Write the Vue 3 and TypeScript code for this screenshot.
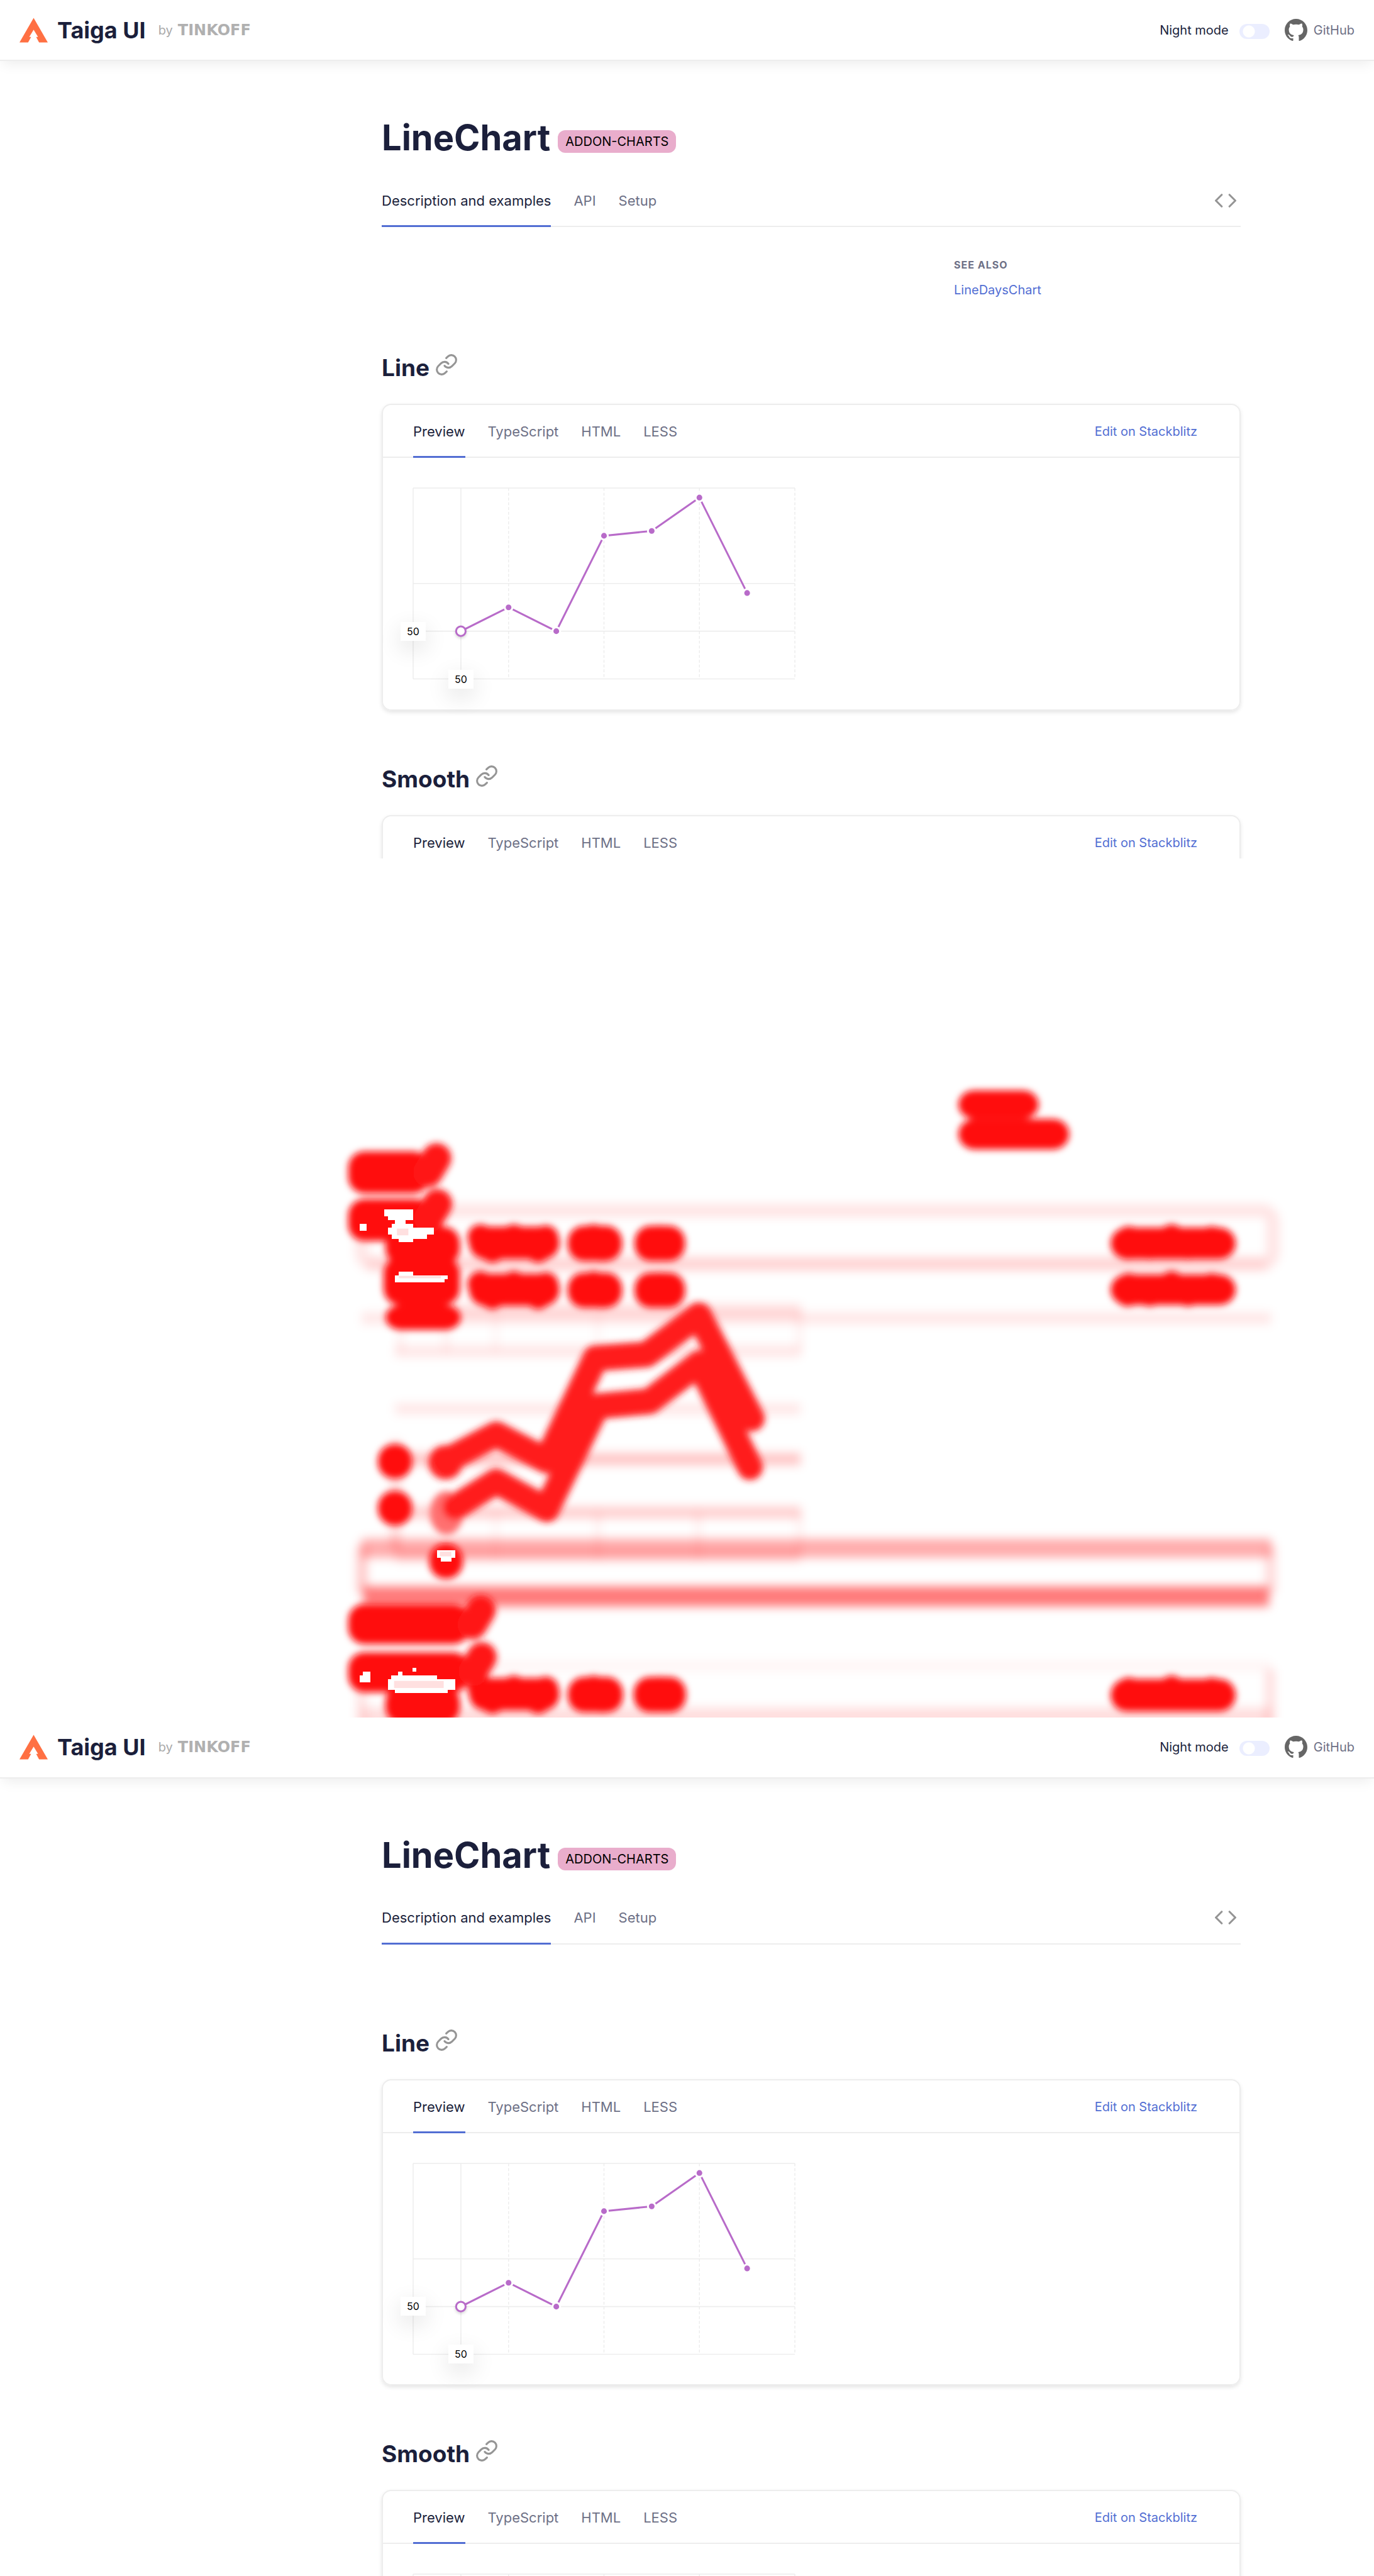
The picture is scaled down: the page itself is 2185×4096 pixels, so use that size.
<script setup lang="ts">
interface Frame {
  id: string
  seeAlso: boolean
}

const before: Frame = { id: 'before', seeAlso: true }
const after: Frame = { id: 'after', seeAlso: false }
const frames: (Frame | null)[] = [before, null, after]

const pageTabs = ['Description and examples', 'API', 'Setup']
const cardTabs = ['Preview', 'TypeScript', 'HTML', 'LESS']
const examples = ['Line', 'Smooth']

const points: [number, number][] = [
  [100, 300], [200, 250], [300, 300], [400, 100], [500, 90], [600, 20], [700, 220],
]
const linePath = points.map((p) => p.join(',')).join(' ')

type Box = [number, number, number, number]

// Regions that differ: x, y, width, height on the 2880 x 1800 frame
const blobs: Box[] = [
  [2009, 486, 168, 60], [2009, 546, 232, 64],
  [730, 614, 170, 88], [730, 714, 174, 88],
  [808, 772, 156, 80], [804, 836, 160, 100], [808, 936, 158, 52],
  [983, 772, 190, 68], [1190, 770, 114, 74], [1330, 770, 106, 74],
  [983, 870, 190, 68], [1190, 868, 114, 74], [1330, 868, 106, 74],
  [2328, 774, 262, 66], [2328, 872, 262, 64],
  [792, 1228, 72, 72], [792, 1326, 72, 72], [900, 1436, 70, 74],
  [730, 1563, 254, 84], [730, 1664, 254, 84], [808, 1734, 156, 80],
  [983, 1718, 190, 68], [1190, 1716, 116, 74], [1328, 1716, 110, 74],
  [2328, 1720, 262, 68],
]

// Uneven edges of the wide regions, where letters rise above or fall below
const rows = [806, 904, 1752]
const bumps: [number, number][] = rows.flatMap((y): [number, number][] => [
  [1007, y - 12], [1077, y - 12], [1144, y - 10], [1032, y + 14], [1128, y + 14],
  [1244, y - 12], [1262, y + 12], [1382, y - 10], [1382, y + 10],
  [2366, y - 8], [2456, y - 12], [2540, y - 8], [2364, y + 8], [2410, y + 8], [2490, y + 8],
])

// Link icons next to the headings
const hooks: [number, number][] = [[915, 628], [917, 724], [1008, 1576], [1010, 1674]]

// Overflowed cells
const holes: Box[] = [
  [805, 735, 61, 15], [813, 750, 53, 8], [828, 758, 22, 8], [821, 766, 45, 8],
  [813, 774, 97, 15], [821, 789, 74, 8], [836, 797, 30, 7], [754, 766, 15, 15],
  [836, 866, 30, 8], [828, 874, 111, 8], [828, 882, 104, 7],
  [916, 1450, 38, 16], [924, 1466, 23, 8],
  [761, 1704, 15, 8], [754, 1712, 22, 15], [835, 1704, 8, 8], [865, 1697, 8, 8],
  [820, 1712, 96, 9], [813, 1720, 141, 23], [828, 1743, 111, 7],
]

const faint: { box: Box; opacity: number }[] = [
  { box: [758, 951, 1906, 26], opacity: 0.09 },
  { box: [828, 934, 850, 28], opacity: 0.12 },
  { box: [828, 1020, 850, 26], opacity: 0.09 },
  { box: [828, 1142, 850, 24], opacity: 0.09 },
  { box: [828, 1246, 850, 26], opacity: 0.22 },
  { box: [828, 1358, 850, 26], opacity: 0.18 },
  { box: [828, 1446, 850, 30], opacity: 0.12 },
  { box: [758, 1426, 1906, 40], opacity: 0.32 },
  { box: [762, 1526, 1898, 42], opacity: 0.52 },
  { box: [758, 1682, 1906, 22], opacity: 0.04 },
  { box: [758, 1780, 1906, 40], opacity: 0.13 },
  { box: [748, 1440, 22, 100], opacity: 0.22 },
  { box: [2652, 1440, 22, 100], opacity: 0.15 },
  { box: [748, 1700, 20, 120], opacity: 0.12 },
  { box: [2652, 1700, 20, 120], opacity: 0.13 },
  { box: [832, 950, 14, 84], opacity: 0.06 },
  { box: [928, 950, 14, 84], opacity: 0.06 },
  { box: [1032, 950, 14, 84], opacity: 0.04 },
  { box: [1246, 950, 14, 84], opacity: 0.04 },
  { box: [1668, 950, 14, 84], opacity: 0.06 },
  { box: [818, 1220, 22, 230], opacity: 0.14 },
  { box: [1032, 1370, 14, 100], opacity: 0.04 },
  { box: [1246, 1370, 14, 100], opacity: 0.06 },
  { box: [1456, 1370, 14, 100], opacity: 0.06 },
  { box: [1668, 1370, 14, 90], opacity: 0.06 },
]
</script>

<template>
  <div class="board">
    <template v-for="(frame, i) in frames" :key="i">
      <section v-if="frame" class="frame">
        <header class="header">
          <a class="brand" href="#">
            <svg class="logo" viewBox="0 0 60 52" aria-hidden="true">
              <path fill="#ff7043" d="M30 0 60 52H41.5L35.3 40.3H39.3L30 25 20.7 40.3H24.7L18.2 52H0Z" />
            </svg>
            <span class="name">Taiga UI</span>
          </a>
          <span class="by">by</span>
          <a class="owner" href="#">TINKOFF</a>
          <label class="night" :for="frame.id + '-night'">Night mode</label>
          <input :id="frame.id + '-night'" class="toggle" type="checkbox" />
          <a class="github" href="#">
            <svg viewBox="0 0 16 16" aria-hidden="true">
              <path
                fill="#666"
                d="M8 0C3.58 0 0 3.58 0 8c0 3.54 2.29 6.53 5.47 7.59.4.07.55-.17.55-.38 0-.19-.01-.82-.01-1.49-2.01.37-2.53-.49-2.69-.94-.09-.23-.48-.94-.82-1.13-.28-.15-.68-.52-.01-.53.63-.01 1.08.58 1.23.82.72 1.21 1.87.87 2.33.66.07-.52.28-.87.51-1.07-1.78-.2-3.64-.89-3.64-3.95 0-.87.31-1.59.82-2.15-.08-.2-.36-1.02.08-2.12 0 0 .67-.21 2.2.82.64-.18 1.32-.27 2-.27s1.36.09 2 .27c1.53-1.04 2.2-.82 2.2-.82.44 1.1.16 1.92.08 2.12.51.56.82 1.27.82 2.15 0 3.07-1.87 3.75-3.65 3.95.29.25.54.73.54 1.48 0 1.07-.01 1.93-.01 2.2 0 .21.15.46.55.38A8.01 8.01 0 0 0 16 8c0-4.42-3.58-8-8-8Z"
              />
            </svg>
            GitHub
          </a>
        </header>

        <main class="page">
          <div class="title">
            <h1>LineChart</h1>
            <span class="badge">ADDON-CHARTS</span>
          </div>

          <nav class="tabs page-tabs">
            <button v-for="(tab, t) in pageTabs" :key="tab" type="button" :class="['tab', { active: t === 0 }]">
              {{ tab }}
            </button>
            <button class="code" type="button" aria-label="Source code">
              <svg viewBox="0 0 44 28" aria-hidden="true">
                <path d="M14 2 2 14 14 26M30 2 42 14 30 26" />
              </svg>
            </button>
          </nav>

          <div class="intro">
            <aside v-if="frame.seeAlso" class="see-also">
              <h3>SEE ALSO</h3>
              <a href="#">LineDaysChart</a>
            </aside>
          </div>

          <section v-for="name in examples" :key="name" class="example">
            <h2>
              {{ name }}
              <a class="anchor" href="#" :aria-label="name + ' link'">
                <svg viewBox="1 1 22 22" aria-hidden="true">
                  <path d="M10 13a5 5 0 0 0 7.54.54l3-3a5 5 0 0 0-7.07-7.07l-1.72 1.71M14 11a5 5 0 0 0-7.54-.54l-3 3a5 5 0 0 0 7.07 7.07l1.71-1.71" />
                </svg>
              </a>
            </h2>
            <div class="card">
              <div class="tabs card-tabs">
                <button v-for="(tab, t) in cardTabs" :key="tab" type="button" :class="['tab', { active: t === 0 }]">
                  {{ tab }}
                </button>
                <a class="edit" href="#">Edit on Stackblitz</a>
              </div>
              <div class="preview">
                <div class="chart">
                  <svg viewBox="0 0 800 400" aria-hidden="true">
                    <g class="grid">
                      <path d="M0 0H800M0 200H800M0 300H800M0 400H800M0 0V400M100 0V400" />
                      <path class="dashed" d="M200 0V400M400 0V400M600 0V400M800 0V400" />
                    </g>
                    <polyline class="line" :points="linePath" />
                    <circle v-for="p in points.slice(1)" :key="p[0]" class="dot" :cx="p[0]" :cy="p[1]" r="8" />
                    <circle class="dot-active" cx="100" cy="300" r="10" />
                  </svg>
                  <span class="hint hint-y">50</span>
                  <span class="hint hint-x">50</span>
                </div>
              </div>
            </div>
          </section>
        </main>
      </section>

      <section v-else class="frame">
        <svg class="diff" viewBox="0 0 2880 1800" preserveAspectRatio="none" aria-hidden="true">
          <defs>
            <filter id="soft" filterUnits="userSpaceOnUse" x="0" y="0" width="2880" height="1800">
              <feGaussianBlur stdDeviation="7" />
            </filter>
            <filter id="haze" filterUnits="userSpaceOnUse" x="0" y="0" width="2880" height="1830">
              <feGaussianBlur stdDeviation="10" />
            </filter>
          </defs>
          <g filter="url(#haze)">
            <rect x="758" y="738" width="1910" height="112" rx="24" fill="none" stroke="#f00" stroke-opacity="0.1" stroke-width="28" />
            <rect x="770" y="836" width="1884" height="28" fill="#f00" fill-opacity="0.08" />
            <rect
              v-for="(f, k) in faint" :key="'f' + k" fill="#f00" :fill-opacity="f.opacity"
              :x="f.box[0]" :y="f.box[1]" :width="f.box[2]" :height="f.box[3]"
            />
          </g>
          <g filter="url(#soft)">
            <circle cx="934" cy="1266" r="36" fill="#ff2020" />
            <ellipse cx="936" cy="1372" rx="35" ry="46" fill="#ff7070" />
            <g class="trace">
              <polyline points="940,1260 1040,1207 1146,1262 1248,1048 1355,1040 1465,958 1576,1174" />
              <polyline points="954,1360 1040,1306 1146,1364 1251,1148 1361,1138 1466,1058 1572,1276" />
            </g>
            <rect
              v-for="(b, k) in blobs" :key="'b' + k" fill="#ff0c0c" rx="34"
              :x="b[0]" :y="b[1]" :width="b[2]" :height="b[3]"
            />
            <circle v-for="(b, k) in bumps" :key="'c' + k" fill="#ff0c0c" :cx="b[0]" :cy="b[1]" r="27" />
            <line
              v-for="(h, k) in hooks" :key="'h' + k" class="hook"
              :x1="h[0]" :y1="h[1]" :x2="h[0] - 18" :y2="h[1] + 30"
            />
          </g>
          <rect
            v-for="(h, k) in holes" :key="'w' + k" fill="#fff" shape-rendering="crispEdges"
            :x="h[0]" :y="h[1]" :width="h[2]" :height="h[3]"
          />
          <g fill="#ffe0e0">
            <rect x="832" y="776" width="24" height="14" />
            <rect x="836" y="875" width="88" height="5" />
            <rect x="922" y="1453" width="24" height="10" />
            <rect x="826" y="1724" width="104" height="15" />
          </g>
        </svg>
      </section>
    </template>
  </div>
</template>

<style>
body {
  margin: 0;
  background: #fff;
}
</style>

<style scoped>
.board {
  display: grid;
  grid-template-rows: repeat(3, minmax(0, 1fr));
  height: 100vh;
  font-family: Inter, "Liberation Sans", sans-serif;
  color: #1b1f3b;
}
.board * {
  box-sizing: border-box;
}
.frame {
  overflow: hidden;
  background: #fff;
}
a {
  color: #526ed3;
  text-decoration: none;
}
button {
  padding: 0;
  border: 0;
  background: none;
  font: inherit;
  color: inherit;
}
h1, h2, h3 {
  margin: 0;
}
svg {
  display: block;
}

.header {
  display: flex;
  align-items: center;
  height: 97px;
  padding: 0 31px;
  border-bottom: 2px solid #ededed;
  box-shadow: 0 8px 20px -4px rgba(0, 0, 0, 0.08);
  font-size: 20px;
}
.brand {
  display: flex;
  align-items: center;
  gap: 15px;
  color: #1b1f3b;
}
.logo {
  width: 45px;
  height: 40px;
}
.name {
  font-size: 36px;
  font-weight: 700;
}
.by {
  margin: 0 8px 0 20px;
  color: #aaa;
}
.owner {
  font: 900 24px "DejaVu Sans", sans-serif;
  color: #b0b0b0;
}
.night {
  margin-left: auto;
}
.toggle {
  appearance: none;
  width: 48px;
  height: 24px;
  margin: 4px 24px 0 17px;
  border-radius: 12px;
  background: radial-gradient(circle at 15px 12px, #fff 9px, #ebeeff 10px);
}
.github {
  display: flex;
  align-items: center;
  gap: 10px;
  color: #6d7086;
}
.github svg {
  width: 36px;
  height: 36px;
}

.page {
  padding: 90px 212px 0 607px;
}
.title {
  display: flex;
  align-items: flex-end;
  gap: 12px;
}
h1 {
  font-size: 56px;
  line-height: 64px;
}
.badge {
  margin-bottom: 8px;
  padding: 0 12px;
  border-radius: 12px;
  background: #e9adcc;
  color: #000;
  font-size: 20px;
  line-height: 36px;
}
.tabs {
  display: flex;
  gap: 36px;
  font-size: 22px;
  color: #6d7086;
  box-shadow: inset 0 -2px #ededed;
}
.page-tabs {
  height: 82px;
  margin-top: 28px;
}
.tab {
  border-bottom: 3px solid transparent;
}
.active {
  border-bottom-color: #526ed3;
  color: #1b1f3b;
}
.code {
  margin: 0 7px 3px auto;
}
.code svg {
  width: 34px;
  height: 22px;
}
.code path, .anchor path {
  fill: none;
  stroke: #959595;
  stroke-width: 4;
  stroke-linecap: round;
  stroke-linejoin: round;
}
.anchor path {
  stroke-width: 2;
}
.intro {
  display: flex;
  justify-content: flex-end;
  padding-top: 48px;
}
.see-also {
  width: 456px;
  height: 67px;
}
h3 {
  margin-bottom: 14px;
  font-size: 16px;
  line-height: 24px;
  letter-spacing: 1px;
  color: #6d7086;
}
.see-also a {
  display: block;
  font-size: 20px;
  line-height: 28px;
}
.example {
  margin-top: 85px;
}
h2 {
  display: flex;
  align-items: flex-start;
  gap: 10px;
  margin-bottom: 33px;
  font-size: 37px;
  line-height: 48px;
}
.anchor {
  padding-top: 2px;
}
.anchor svg {
  width: 34px;
  height: 34px;
}

.card {
  border: 2px solid #ededed;
  border-radius: 15px;
  box-shadow: 0 3px 6px rgba(0, 0, 0, 0.1);
}
.card-tabs {
  height: 84px;
  padding: 0 67px 0 48px;
}
.card-tabs .tab {
  padding-top: 3px;
}
.edit {
  margin-left: auto;
  font-size: 20px;
  line-height: 84px;
}
.preview {
  padding: 48px;
}
.chart {
  position: relative;
  width: 607px;
}
.chart svg {
  width: 100%;
  overflow: visible;
}
.grid path {
  fill: none;
  stroke: #ededed;
  stroke-width: 2;
}
.grid .dashed {
  stroke-dasharray: 6 4;
}
.line {
  fill: none;
  stroke: #b86bc9;
  stroke-width: 4;
}
.dot {
  fill: #b86bc9;
  stroke: #fff;
  stroke-width: 4;
}
.dot-active {
  fill: #fff;
  stroke: #b86bc9;
  stroke-width: 4;
  filter: drop-shadow(0 3px 3px rgba(0, 0, 0, 0.16));
}
.hint {
  position: absolute;
  width: 40px;
  transform: translate(-50%, -50%);
  background: #fff;
  box-shadow: 0 12px 36px rgba(0, 0, 0, 0.12);
  color: #000;
  font-size: 16px;
  line-height: 30px;
  text-align: center;
}
.hint-y {
  left: 0;
  top: 75%;
}
.hint-x {
  left: 12.5%;
  top: 100%;
}

.diff {
  width: 100%;
  height: 100%;
}
.trace polyline {
  fill: none;
  stroke: #ff1a1a;
  stroke-width: 54;
  stroke-linecap: round;
  stroke-linejoin: round;
}
.hook {
  stroke: #ff1616;
  stroke-width: 62;
  stroke-linecap: round;
}
</style>
